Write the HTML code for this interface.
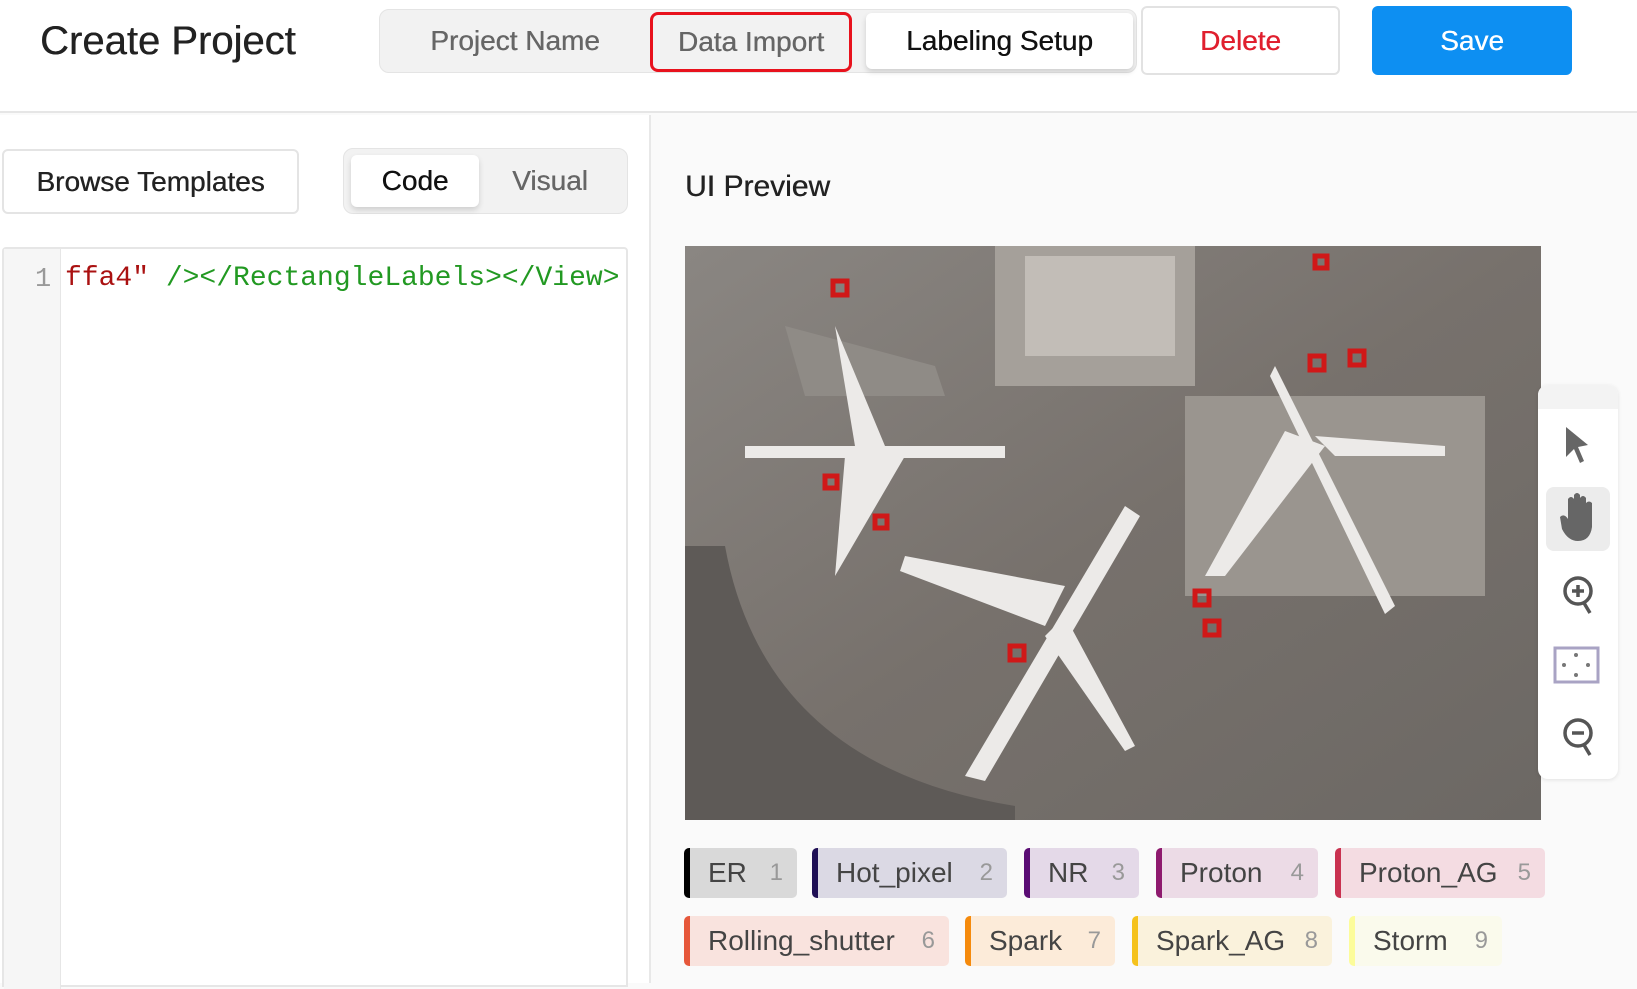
<!DOCTYPE html>
<html><head><meta charset="utf-8">
<style>
*{box-sizing:border-box;margin:0;padding:0}
body{width:1637px;height:983px;overflow:hidden;background:#fafafa;font-family:"Liberation Sans",Arial,sans-serif;position:relative;color:#222}
.a{position:absolute}
.hdr{left:0;top:0;width:1637px;height:113px;background:#fff;border-bottom:2px solid #e6e6e6}
.t{display:flex;align-items:center;justify-content:center}
.tag{position:absolute;height:50px;border-radius:5px;border-left:6px solid;font-size:28px;color:#444;display:flex;align-items:center;padding-left:18px;white-space:nowrap}
.tag span{color:#999;font-size:24px;margin-left:auto;margin-right:14px}
.m{text-shadow:0.4px 0 0 currentColor}
</style></head><body>
<div class="a hdr"></div>
<div class="a m" style="left:40px;top:17px;font-size:40px;color:#222;line-height:48px">Create Project</div>
<div class="a" style="left:379px;top:9px;width:758px;height:64px;background:#f2f2f2;border:1px solid #e4e4e4;border-radius:10px"></div>
<div class="a t m" style="left:382px;top:12px;width:266px;height:58px;font-size:28px;color:#666">Project Name</div>
<div class="a t m" style="left:650px;top:12px;width:202px;height:60px;font-size:28px;color:#666;border:3px solid #e8121d;border-radius:8px">Data Import</div>
<div class="a t m" style="left:866px;top:13px;width:267px;height:56px;font-size:28px;color:#111;background:#fff;border-radius:6px;box-shadow:0 3px 6px rgba(0,0,0,.15)">Labeling Setup</div>
<div class="a t m" style="left:1141px;top:6px;width:199px;height:69px;font-size:28px;color:#e01f2e;background:#fff;border:2px solid #e2e2e2;border-radius:6px">Delete</div>
<div class="a t m" style="left:1372px;top:6px;width:200px;height:69px;font-size:28px;color:#fff;background:#0d8ff2;border-radius:6px">Save</div>

<div class="a" style="left:0;top:115px;width:651px;height:868px;background:#fff;border-right:2px solid #e8e8e8"></div>
<div class="a t m" style="left:2px;top:149px;width:297px;height:65px;font-size:28px;color:#222;background:#fff;border:2px solid #e4e4e4;border-radius:6px">Browse Templates</div>
<div class="a" style="left:343px;top:148px;width:285px;height:66px;background:#f2f2f2;border:1px solid #e4e4e4;border-radius:10px"></div>
<div class="a t m" style="left:351px;top:155px;width:128px;height:52px;font-size:28px;color:#111;background:#fff;border-radius:6px;box-shadow:0 3px 6px rgba(0,0,0,.15)">Code</div>
<div class="a t m" style="left:485px;top:155px;width:130px;height:52px;font-size:28px;color:#666">Visual</div>
<div class="a" style="left:2px;top:247px;width:626px;height:740px;background:#fff;border:2px solid #e6e6e6;border-radius:4px 4px 0 0"></div>
<div class="a" style="left:4px;top:249px;width:57px;height:740px;background:#f6f6f6;border-right:1px solid #e6e6e6"></div>
<div class="a" style="left:35px;top:262px;font-family:'Liberation Mono',monospace;font-size:27px;color:#999;line-height:36px">1</div>
<div class="a" style="left:65px;top:261px;font-family:'Liberation Mono',monospace;font-size:28px;line-height:36px;white-space:nowrap;color:#a11"><span>ffa4"</span> <span style="color:#292">/&gt;&lt;/RectangleLabels&gt;&lt;/View&gt;</span></div>

<div class="a m" style="left:685px;top:170px;font-size:30px;color:#222">UI Preview</div>

<svg class="a" style="left:685px;top:246px" width="856" height="574" viewBox="0 0 856 574">
<defs><linearGradient id="g" x1="0" y1="0" x2="1" y2="1"><stop offset="0" stop-color="#8a8682"/><stop offset=".5" stop-color="#77716c"/><stop offset="1" stop-color="#6c6864"/></linearGradient></defs>
<rect width="856" height="574" fill="url(#g)"/>
<rect x="310" y="0" width="200" height="140" fill="#a5a09a"/>
<rect x="340" y="10" width="150" height="100" fill="#c2bdb7"/>
<path d="M40 300 Q80 520 330 560 L330 574 L0 574 L0 300Z" fill="#5e5a57"/>
<path d="M100 80 L250 120 L260 150 L120 150Z" fill="#8f8b86"/>
<rect x="500" y="150" width="300" height="200" fill="#9a958f"/>
<g fill="#eceae8">
<path d="M60 200 L320 200 L320 212 L60 212Z"/><path d="M150 80 L200 200 L170 200Z"/><path d="M160 210 L220 210 L150 330Z"/>
<path d="M590 120 L710 360 L700 368 L585 130Z"/><path d="M600 185 L520 330 L540 330 L640 200Z"/><path d="M630 190 L760 200 L760 210 L650 210Z"/>
<path d="M440 260 L280 530 L300 535 L455 270Z"/><path d="M380 340 L220 310 L215 325 L360 380Z"/><path d="M380 370 L450 500 L440 505 L360 390Z"/>
</g>
<g fill="none" stroke="#d01818" stroke-width="5">
<rect x="148" y="35" width="14" height="14"/><rect x="630" y="10" width="12" height="12"/><rect x="625" y="110" width="14" height="14"/><rect x="665" y="105" width="14" height="14"/><rect x="140" y="230" width="12" height="12"/><rect x="190" y="270" width="12" height="12"/><rect x="510" y="345" width="14" height="14"/><rect x="520" y="375" width="14" height="14"/><rect x="325" y="400" width="14" height="14"/>
</g>
</svg>

<div class="a" style="left:1538px;top:385px;width:80px;height:394px;background:#fff;border-radius:10px;box-shadow:0 1px 4px rgba(0,0,0,.1)"></div>
<div class="a" style="left:1538px;top:385px;width:80px;height:24px;background:#f3f3f3;border-radius:10px 10px 0 0"></div>
<svg class="a" style="left:1538px;top:385px" width="80" height="394" viewBox="0 0 80 394">
<path d="M28 42 L50 60 L40 62 L46 76 L42 78 L36 64 L28 72Z" fill="#666"/>
<rect x="8" y="102" width="64" height="64" rx="8" fill="#ececec"/>
<path d="M22 132 Q26 128 30 134 L30 114 Q33 110 36 114 L36 110 Q39 106 42 110 L42 113 Q45 109 48 113 L48 118 Q51 115 54 118 L54 142 Q52 156 40 156 Q30 156 24 144Z" fill="#666"/>
<g fill="none" stroke="#555" stroke-width="3.5"><circle cx="40" cy="206" r="13"/><path d="M46 218 L52 228"/><path d="M34 206h12M40 200v12"/>
<circle cx="40" cy="348" r="13"/><path d="M46 360 L52 370"/><path d="M34 348h12"/></g>
<rect x="17" y="263" width="43" height="34" fill="none" stroke="#a9a3c4" stroke-width="3"/>
<g fill="#777"><circle cx="38" cy="270" r="2"/><circle cx="38" cy="290" r="2"/><circle cx="26" cy="280" r="2"/><circle cx="50" cy="280" r="2"/></g>
</svg>

<div class="tag" style="left:684px;top:848px;width:113px;border-color:#000;background:#d9d9d9">ER<span>1</span></div>
<div class="tag" style="left:812px;top:848px;width:195px;border-color:#1f0f55;background:#dbd9e4">Hot_pixel<span>2</span></div>
<div class="tag" style="left:1024px;top:848px;width:115px;border-color:#5a0c74;background:#e4d9e8">NR<span>3</span></div>
<div class="tag" style="left:1156px;top:848px;width:162px;border-color:#8e1a6e;background:#ecdbe6">Proton<span>4</span></div>
<div class="tag" style="left:1335px;top:848px;width:210px;border-color:#c93250;background:#f4dce2">Proton_AG<span>5</span></div>
<div class="tag" style="left:684px;top:916px;width:265px;border-color:#e6573a;background:#f9e3de">Rolling_shutter<span>6</span></div>
<div class="tag" style="left:965px;top:916px;width:150px;border-color:#f58a0c;background:#fcebd9">Spark<span>7</span></div>
<div class="tag" style="left:1132px;top:916px;width:200px;border-color:#f5c21c;background:#faf2dc">Spark_AG<span>8</span></div>
<div class="tag" style="left:1349px;top:916px;width:153px;border-color:#fcfc9a;background:#fafaec">Storm<span>9</span></div>
</body></html>
